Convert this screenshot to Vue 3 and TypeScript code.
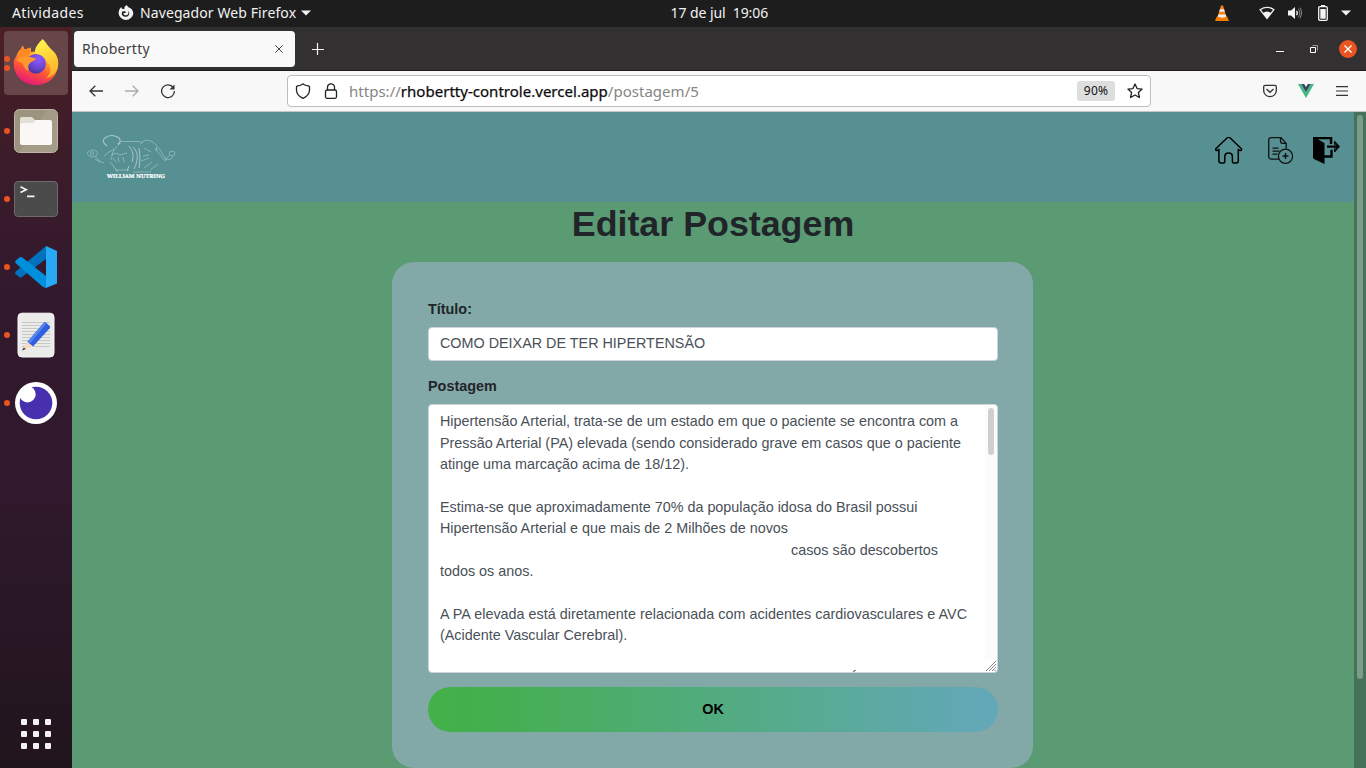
<script setup lang="ts">
interface DockApp { name: string; dots: number; active?: boolean }

const dock: DockApp[] = [
  { name: 'firefox', dots: 2, active: true },
  { name: 'files', dots: 1 },
  { name: 'terminal', dots: 1 },
  { name: 'code', dots: 1 },
  { name: 'editor', dots: 1 },
  { name: 'insomnia', dots: 1 },
]

interface Line { text: string; kind?: string }

const lines: Line[] = [
  { text: 'Hipertensão Arterial, trata-se de um estado em que o paciente se encontra com a' },
  { text: 'Pressão Arterial (PA) elevada (sendo considerado grave em casos que o paciente' },
  { text: 'atinge uma marcação acima de 18/12).' },
  { text: '' },
  { text: 'Estima-se que aproximadamente 70% da população idosa do Brasil possui' },
  { text: 'Hipertensão Arterial e que mais de 2 Milhões de novos' },
  { text: 'casos são descobertos', kind: 'indented' },
  { text: 'todos os anos.' },
  { text: '' },
  { text: 'A PA elevada está diretamente relacionada com acidentes cardiovasculares e AVC', kind: 'wide' },
  { text: '(Acidente Vascular Cerebral).' },
  { text: '' },
  { text: 'É', kind: 'clipped' },
]
</script>

<template>
  <div class="desktop">
    <header class="topbar">
      <span class="activities">Atividades</span>
      <span class="appmenu">
        <svg width="16" height="16" viewBox="0 0 16 16">
          <path d="M8.500 0l2 2.300A7 7 0 0 1 15.300 8.400 7.400 7.400 0 0 1 .6 8.400C.6 5.600 1.600 3.500 3.300 2l.5 1.700L6.400 3.900 6.500 2.100z" fill="#f2f2f2" />
          <path d="M4.800 6.300c1.700-.5 3.200.2 3.500 1.200-1.500-.2-1.800.9-3.100 1 .4 1.500 2.400 2.300 4 1.400 1.400-.8 1.700-2.500.8-4.200 2.100 1.700 1.600 5.600-1.900 6-4.200.3-5.400-3.100-3.300-5.400z" fill="#1d1d1d" />
        </svg>
        <span class="appname">Navegador Web Firefox</span>
        <svg width="10" height="6" viewBox="0 0 10 6"><path d="M0 .5h10L5 5.500z" fill="#f2f2f2" /></svg>
      </span>
      <span class="clock">17 de jul&nbsp; 19:06</span>
      <span class="tray">
        <svg width="16" height="18" viewBox="0 0 16 18">
          <path d="M2.800 12.500h10.400l1.800 4.500H1z" fill="#f57b00" />
          <path d="M7 1.500h2L12.500 13c-2 1.700-7 1.700-9 0z" fill="#f58212" />
          <path d="M6 5.200h4l.8 2.600H5.200zM4.300 10.500h7.400l.6 2c-2 1.600-6.500 1.600-8.600 0z" fill="#eee" />
        </svg>
        <svg class="wifi" width="16" height="14" viewBox="0 0 16 14">
          <path d="M1.100 3.700Q8-1 14.900 3.700L8 12.500z" fill="none" stroke="#eee" stroke-width="1.300" />
          <path d="M3.800 7Q8 4 12.200 7L8 12.500z" fill="#f4f4f4" />
        </svg>
        <svg class="sound" width="16" height="14" viewBox="0 0 16 14">
          <path d="M1 4.500h3L8 1v12L4 9.500H1z" fill="#f4f4f4" />
          <path d="M9.500 4.800q1.700 2.200 0 4.400" fill="none" stroke="#eee" stroke-width="1.300" />
          <path d="M11.200 2.800q3.300 4.200 0 8.400M13 1.700q3.200 5 0 10.600" fill="none" stroke="#8a8a8a" />
        </svg>
        <svg class="battery" width="10" height="16" viewBox="0 0 10 16">
          <path d="M3 0h4v2H3z" fill="#f4f4f4" />
          <rect x=".7" y="1.700" width="8.600" height="13.600" rx="1.200" fill="none" stroke="#f4f4f4" stroke-width="1.300" />
          <rect x="2.300" y="4" width="5.400" height="9.700" fill="#f4f4f4" />
        </svg>
        <svg class="caret" width="10" height="6" viewBox="0 0 10 6"><path d="M0 .5h10L5 5.500z" fill="#f2f2f2" /></svg>
      </span>
    </header>

    <div class="workspace">
      <aside class="dock">
        <div v-for="app in dock" :key="app.name" class="dock-item" :class="{ active: app.active }">
          <span class="dots"><i v-for="n in app.dots" :key="n"></i></span>
          <svg v-if="app.name === 'firefox'" width="48" height="48" viewBox="0 1 48 48">
            <defs>
              <linearGradient id="fox" x1=".75" y1="0" x2=".3" y2="1">
                <stop offset="0" stop-color="#fff44f" /><stop offset=".32" stop-color="#ffb02e" />
                <stop offset=".6" stop-color="#ff5a32" /><stop offset="1" stop-color="#e3137f" />
              </linearGradient>
              <radialGradient id="globe" cx=".65" cy=".25" r=".8">
                <stop offset="0" stop-color="#9059ff" /><stop offset=".6" stop-color="#6b46cf" /><stop offset="1" stop-color="#45339a" />
              </radialGradient>
              <linearGradient id="tail" x1=".5" y1="0" x2=".8" y2="1">
                <stop offset="0" stop-color="#fff04b" /><stop offset="1" stop-color="#ffaa25" />
              </linearGradient>
            </defs>
            <path d="M4.300 18.500C5.500 14.500 7 12.500 9 11l1.500-3.500 2 4L18 10l.5-1 .7 5L34 12c8 4 12.200 11 11.700 16.500C45 39 36 47 24 47S1.700 38.500 1.700 25.500c0-3 1-5.500 2.600-7z" fill="url(#fox)" />
            <path d="M30.500 1c4 3.500 5.500 7.500 10.500 12 4.500 4 6 10 5 16-1.500 6.500-6.500 10-12 11 5-4 5.500-9 3-14-3-5.500-11-5-13.800-11C22 9.500 27 5 30.500 1z" fill="url(#tail)" />
            <circle cx="24" cy="25.800" r="9.900" fill="url(#globe)" />
            <path d="M4 23c2.500-4.500 7-5.500 11-4.500 3 .5 6 1 9 2-.7 2.300-4 2.700-6 4.500-2 1.500-2.500 5-.5 8-4-1-6-4-6.500-7C9 25 7 23 4 23z" fill="#ff982c" />
            <path d="M9 11l1.500-3.500 2 4L18 10l1 4-3 5c-4-1.500-8 0-11 4 1-5 1.500-8 4-12z" fill="#ff8a25" />
          </svg>
          <svg v-else-if="app.name === 'files'" width="48" height="48" viewBox="0 0 48 48">
            <rect x="2.500" y="2.500" width="43" height="43" rx="5" fill="#9d947f" stroke="#bbb5a6" />
            <path d="M35 3h6q4 0 4 4v34q0 4-4 4H7z" fill="#aaa18d" opacity=".6" />
            <path d="M8 12q0-2 2-2h10l3.500 3.500H36V30H8z" fill="#e3dfd5" />
            <path d="M8 18q0-2 2-2h11l2.500-3H38q2 0 2 2v21q0 2-2 2H10q-2 0-2-2z" fill="#f9f8f6" />
          </svg>
          <svg v-else-if="app.name === 'terminal'" width="48" height="48" viewBox="0 0 48 48">
            <rect x="2.500" y="6.500" width="43" height="35" rx="3.500" fill="#4b4b4b" stroke="#6d6b6b" />
            <path d="M8.500 11.800l5.700 2.900-5.700 2.900M15 21.300h7.500" fill="none" stroke="#f5f5f5" stroke-width="1.700" />
          </svg>
          <svg v-else-if="app.name === 'code'" width="48" height="48" viewBox="0 0 48 48">
            <path d="M3.500 31q-1-1.500.5-2.700L34 3v13L8.500 35z" fill="#0071bd" />
            <path d="M3.500 20q-1-1.500.5-2.700l4-3.300q1-.5 2 .3L34 33v12l-3-1z" fill="#0090db" />
            <path d="M34 3l11 5v32.500L34 45z" fill="#27a9f4" />
          </svg>
          <svg v-else-if="app.name === 'editor'" width="48" height="48" viewBox="0 0 48 48">
            <rect x="6" y="2.200" width="36" height="43.800" rx="4" fill="#ebebea" stroke="#f7f7f7" />
            <path d="M10 11.500h28M10 14.500h28M10 17.500h28M10 20.500h28M10 23.500h28M10 26.500h28M10 29.500h28M10 32.500h28M10 35.500h28" stroke="#c7c7c7" />
            <path d="M15.300 31L32 11.500q1-1 2 0l4 4q.5 1-.5 2L21 35.500z" fill="#2e60df" />
            <path d="M15.300 31L32 11.500q1-1 2 0l.8.8L17.500 33z" fill="#5584ee" />
            <path d="M10 39.500L15.300 31l5.700 4.500z" fill="#f9d9bd" /><path d="M10 39.500l1.800-3 2 1.500z" fill="#333" />
          </svg>
          <svg v-else width="48" height="48" viewBox="0 0 48 48">
            <circle cx="24" cy="24" r="21" fill="#fff" />
            <circle cx="24" cy="24" r="16.300" fill="#4730ad" />
            <circle cx="15.500" cy="15.200" r="8.200" fill="#fff" />
          </svg>
        </div>
        <div class="apps"><i v-for="n in 9" :key="n"></i></div>
      </aside>

      <section class="browser">
        <div class="tabs">
          <div class="tab">
            <span>Rhobertty</span>
            <svg width="8" height="8" viewBox="0 0 8 8"><path d="M.3.300l7.400 7.400M7.700.300L.3 7.700" stroke="#444" /></svg>
          </div>
          <svg class="plus" width="12" height="12" viewBox="0 0 12 12"><path d="M5.500 0v12M0 6.500h12" stroke="#f5f5f5" stroke-width="1.200" /></svg>
          <div class="winctl">
            <svg width="8" height="10" viewBox="0 0 8 10"><path d="M0 7.500h8" stroke="#fff" /></svg>
            <svg class="restore" width="8" height="8" viewBox="0 0 8 8"><path d="M.5 2.500h5v5h-5z" fill="none" stroke="#fff" /><path d="M2.500.500h5v5" fill="none" stroke="#999" /></svg>
            <svg class="close" width="18" height="18" viewBox="0 0 18 18"><circle cx="9" cy="9" r="9" fill="#e95420" /><path d="M5.500 5.500l7 7M12.500 5.500l-7 7" stroke="#fff" stroke-width="1.400" /></svg>
          </div>
        </div>

        <div class="toolbar">
          <svg class="back" width="14" height="12" viewBox="0 0 14 12"><path d="M14 6H1M6.300.800L1 6l5.300 5.200" fill="none" stroke="#333" stroke-width="1.300" /></svg>
          <svg class="forward" width="14" height="12" viewBox="0 0 14 12"><path d="M0 6h13M7.700.800L13 6l-5.300 5.200" fill="none" stroke="#aaa" stroke-width="1.300" /></svg>
          <svg class="reload" width="16" height="16" viewBox="0 0 16 16"><path d="M13.300 4.600A6.400 6.400 0 1 0 14.400 8" fill="none" stroke="#333" stroke-width="1.300" /><path d="M14.500 1.500v5H9.500z" fill="#333" /></svg>
          <div class="urlbar">
            <svg width="16" height="16" viewBox="0 0 16 16"><path d="M8 .9l1 .6c1.300.8 3 1.300 4.500 1.400l1 .9v3.400C14.300 11 12 13.500 8 15.300 4 13.500 1.700 11 1.500 7.200V3.800l1-.9C4 2.800 5.700 2.300 7 1.500z" fill="none" stroke="#222" stroke-width="1.300" /></svg>
            <svg class="lock" width="14" height="16" viewBox="0 0 14 16"><rect x="1.500" y="7" width="11" height="8.300" rx="1.500" fill="none" stroke="#222" stroke-width="1.300" /><path d="M3.500 7V4.300a3.500 3.500 0 0 1 7 0V7" fill="none" stroke="#222" stroke-width="1.300" /></svg>
            <span class="url">https://<b>rhobertty-controle.vercel.app</b>/postagem/5</span>
            <span class="zoom">90%</span>
            <svg class="star" width="16" height="16" viewBox="0 0 16 16"><path d="M8 1l2.100 4.600 5 .5-3.700 3.400 1 5L8 12l-4.400 2.500 1-5L.9 6.100l5-.5z" fill="none" stroke="#222" stroke-width="1.300" stroke-linejoin="round" /></svg>
          </div>
          <div class="tools">
            <svg width="14" height="14" viewBox="0 0 14 14"><path d="M2 1.400h10q1.300 0 1.300 1.300v4A6.300 5.900 0 0 1 .7 6.700v-4Q.7 1.400 2 1.400z" fill="none" stroke="#333" stroke-width="1.300" /><path d="M3.500 5L7 8.300 10.500 5" fill="none" stroke="#333" stroke-width="1.300" /></svg>
            <svg width="16" height="14" viewBox="0 0 16 14"><path d="M0 0h3.200L8 8.200 12.800 0H16L8 14z" fill="#42b983" /><path d="M3.200 0H6.200L8 3.100 9.800 0h3L8 8.200z" fill="#35495e" /></svg>
            <svg class="menu" width="12" height="10" viewBox="0 0 12 10"><path d="M0 .6h12M0 5h12M0 9.400h12" stroke="#333" stroke-width="1.200" /></svg>
          </div>
        </div>

        <div class="viewport">
          <div class="page">
            <nav class="site-header">
              <svg class="logo" width="90" height="46" viewBox="0 0 90 46">
                <g fill="none" stroke="#d3e7e4" stroke-width=".65" opacity=".65">
                  <ellipse cx="6.500" cy="19.500" rx="5" ry="3.500" /><circle cx="6" cy="19.500" r="1.700" />
                  <path d="M9 22l6 6 3 .8M9 25l5 3M18 22l5-4 5-3" />
                  <path d="M21 12c-4-3-5-6-2-8 4-3.500 10-3 14 0 2 2 1 5-1 7" stroke-width="1.100" />
                  <path d="M31 12l-4 6-2 8M34 7.500h18l5 1M31 9l4 1" />
                  <path d="M25 21c4-2 6-2 9 0l7-2M27 24l3 4M32 23l1 5M37 23l1 5M24 28l8 10M29 36h14" />
                  <path d="M43 12c4 5 5 10 3 16M47 13c5 5 6 12 1 22M43 32l-2 5M53 14l1 10-1 10" stroke-width="1" />
                  <path d="M55 10c1-4 7-5 12-2l4 4-1 5M58 14l7 4M57 22l6-1M55 27l8-3M58 34l8-6M64 36l8-6M69 14l10 13M72 13l8 12M47 38h18" />
                  <ellipse cx="86" cy="19.500" rx="3" ry="2.300" /><path d="M83 22l-4 4 6-1 2-3" />
                </g>
                <text x="21" y="43.700" textLength="58" lengthAdjust="spacingAndGlyphs" class="logo-name">WILLIAM NUTRING</text>
              </svg>
              <div class="nav-icons">
                <svg width="28" height="28" viewBox="0.400 0.800 28 28"><path d="M14 1q.7 0 1.300.6l11 10.500q1 1 .5 1.800-.5.500-1.800.1l-1.300-.6v11q0 2.500-2 2.500h-2.400q-1.500 0-1.500-1.500v-5q0-3.700-3.800-3.700t-3.800 3.700v5q0 1.500-1.500 1.500H6.300q-2 0-2-2.500v-11L3 14q-1.300.4-1.800-.1-.5-.8.5-1.800l11-10.500Q13.300 1 14 1z" fill="none" stroke="#000" stroke-width="1.500" /></svg>
                <svg class="doc" width="26" height="28" viewBox="0.500 0.400 26 28"><g fill="none" stroke="#111" stroke-width="1.300"><path d="M11.500 22.500H4Q1.200 22.500 1.200 19.500V3.700Q1.200 1.100 4 1.100h9.500l5.200 5.700V12M13 1v3.500q0 2.200 2.200 2.200h3.300M5 11.500h6M5 14.500h7M5 17.500h5" /><circle cx="18" cy="19.700" r="7.100" /><path d="M15 19.500h6M18 16.500v6" stroke-width="1.500" /></g></svg>
                <svg width="28" height="28" viewBox="0 0 28 28"><path d="M0 0h19.300v7h-2.500V2.300H4.700L11.500 6v21L1 22Q0 21.500 0 20.200z" fill="#000" /><path d="M11 19.500h7.500V12.700" fill="none" stroke="#000" stroke-width="2.300" /><path d="M14 9.600h12" stroke="#000" stroke-width="2.300" /><path d="M21.600 4.200L26.500 9.600l-4.900 5.400z" fill="#000" stroke="#000" stroke-width="1" stroke-linejoin="round" /><path d="M19.500 8.300h3.300V6.600M19.500 11h3.300v1.600" fill="none" stroke="#569093" stroke-width=".5" /></svg>
              </div>
            </nav>
            <h1>Editar Postagem</h1>
            <form class="card" @submit.prevent>
              <label>Título:</label>
              <div class="field">COMO DEIXAR DE TER HIPERTENSÃO</div>
              <label class="second">Postagem</label>
              <div class="textarea">
                <div v-for="(line, i) in lines" :key="i" class="line" :class="line.kind">{{ line.text }}</div>
                <span class="track"><i></i></span>
                <svg class="grip" width="10" height="10" viewBox="0 0 10 10"><path d="M0 10L10 0M3 10l7-7M6 10l4-4M8.500 10L10 8.500" stroke="#777" stroke-width=".9" /></svg>
              </div>
              <button type="submit">OK</button>
            </form>
          </div>
          <div class="page-scroll"><i></i></div>
        </div>
      </section>
    </div>
  </div>
</template>

<style>
html, body { overflow: hidden; }
</style>

<style scoped>
* { box-sizing: border-box; }
svg { display: block; flex: none; }
.desktop { width: 1366px; height: 768px; display: flex; flex-direction: column; overflow: hidden; font-family: "Noto Sans", "Open Sans", sans-serif; }
.topbar { height: 27px; flex: none; background: #1d1d1d; color: #f2f2f2; display: flex; align-items: center; padding: 0 15px 1px 12px; font-size: 14px; line-height: 26px; white-space: nowrap; }
.activities { width: 106px; letter-spacing: 0.38px; }
.appmenu { display: flex; align-items: center; width: 552px; }
.appname { margin: 0 5px 0 6px; letter-spacing: 0.1px; }
.clock { width: 99px; letter-spacing: -0.07px; padding-left: 0.5px; }
.tray { display: flex; align-items: center; margin-left: auto; }
.wifi { margin-left: 29px; }
.sound { margin-left: 12px; }
.battery { margin-left: 15px; }
.caret { margin-left: 13px; }

.workspace { flex: 1; display: flex; min-height: 0; }
.dock { width: 72px; flex: none; display: flex; flex-direction: column; gap: 4px; padding: 4px 4px 19px; background: linear-gradient(#4b2025 0%, #3d1c29 16%, #32192e 36%, #30192c 62%, #241621 90%, #21151d 100%); }
.dock-item { height: 64px; width: 64px; border-radius: 4px; display: flex; align-items: center; justify-content: center; position: relative; }
.dock-item.active { background: #664649; }
.dots { position: absolute; left: 0; top: 0; bottom: 0; display: flex; flex-direction: column; justify-content: center; gap: 3px; }
.dots i { width: 6px; height: 6px; border-radius: 50%; background: #e95420; }
.apps { margin: auto 0 0 17px; display: grid; grid-template-columns: repeat(3, 6px); gap: 6px; }
.apps i { width: 6px; height: 6px; border-radius: 1px; background: #f3f1f2; }

.browser { flex: 1; display: flex; flex-direction: column; min-width: 0; }
.tabs { height: 44px; flex: none; background: #323031; border-bottom: 1px solid #1c1a1b; display: flex; align-items: center; padding: 0 9px 0 2px; }
.tab { width: 221px; height: 36px; background: #f9f9f9; border-radius: 4px; display: flex; align-items: center; justify-content: space-between; padding: 0 12px 0 8px; font-size: 14px; color: #3d3d3d; letter-spacing: 0.28px; line-height: 38px; }
.plus { margin-left: 17px; }
.winctl { margin-left: auto; display: flex; align-items: center; }
.restore { margin-left: 26px; }
.close { margin-left: 21px; }
.toolbar { height: 41px; flex: none; background: #f8f8f8; border-bottom: 1px solid #c6c6c6; display: flex; align-items: center; padding: 0 18px 0 17px; }
.forward { margin-left: 22px; }
.reload { margin-left: 21px; }
.urlbar { margin-left: 111px; width: 864px; height: 32px; background: #fff; border: 1px solid #bdbdbd; border-radius: 4px; display: flex; align-items: center; padding: 0 7px; }
.lock { margin-left: 13px; }
.url { margin-left: 11px; font-size: 15px; color: #858585; white-space: nowrap; letter-spacing: 0.02px; }
.url b { font-weight: 400; color: #0c0c0d; -webkit-text-stroke: 0.25px #0c0c0d; }
.zoom { margin-left: auto; width: 38px; height: 20px; line-height: 20px; border-radius: 3px; background: #dedede; color: #111; text-align: center; font-size: 12px; letter-spacing: 0.2px; }
.star { margin-left: 12px; }
.tools { margin-left: auto; display: flex; align-items: center; gap: 21px; }
.tools .menu { margin-left: 1px; }

.viewport { flex: 1; display: flex; min-height: 0; }
.page { flex: 1; background: #5a9b74; font-family: "Liberation Sans", Arial, sans-serif; color: #212529; display: flex; flex-direction: column; align-items: center; }
.site-header { align-self: stretch; height: 90px; flex: none; background: #569093; display: flex; align-items: flex-start; justify-content: space-between; padding: 22px 13px 0 14px; }
.logo-name { font-family: "DejaVu Serif", serif; font-weight: 700; font-size: 5px; fill: #fff; stroke: #fff; stroke-width: .2px; }
.nav-icons { display: flex; padding-top: 3px; }
.nav-icons .doc { margin: 0 19px 0 25px; }
h1 { margin: 0; height: 60px; line-height: 44px; font-size: 35.8px; font-weight: 700; white-space: nowrap; }
.card { width: 641px; height: 506px; flex: none; margin: 0 1px 0 0; padding: 36px 35px 36px 36px; background: #83a8a8; border-radius: 22px; display: flex; flex-direction: column; }
label { font-size: 14.4px; font-weight: 700; line-height: 22px; height: 29px; }
.field { height: 34px; border: 1px solid #ced4da; border-radius: 4px; background: #fff; color: #495057; font-size: 14.37px; line-height: 31px; padding: 0 11px; white-space: pre; }
.second { margin-top: 14px; }
.textarea { height: 269px; border: 1px solid #ced4da; border-radius: 4px; background: #fff; color: #495057; font-size: 14.37px; line-height: 21.4px; padding: 6.200px 11px 0; overflow: hidden; position: relative; }
.line { height: 21.4px; white-space: pre; }
.wide { letter-spacing: 0.02px; }
.indented { padding-left: 351px; }
.clipped { padding-left: 409px; }
.track { position: absolute; right: 0; top: 0; bottom: 12px; width: 12px; background: #fbfbfb; }
.track i { display: block; width: 6px; height: 47px; margin: 3px 0 0 3px; border-radius: 3px; background: #cfcfcf; }
.grip { position: absolute; right: 1px; bottom: 1px; }
button { margin: 14px 0 0; height: 45px; flex: none; border: 0; border-radius: 22.5px; padding: 0 0 2px; font: 700 14.4px "Liberation Sans", Arial, sans-serif; color: #000; background: linear-gradient(90deg, #43b049 0%, #43af4c 8%, #62a8b6 96%, #63a8b8 100%); }
.page-scroll { width: 12px; flex: none; background: #44735a; }
.page-scroll i { display: block; width: 6px; height: 564px; margin: 3px 0 0 3px; border-radius: 3px; background: #7c9b8a; }
</style>
